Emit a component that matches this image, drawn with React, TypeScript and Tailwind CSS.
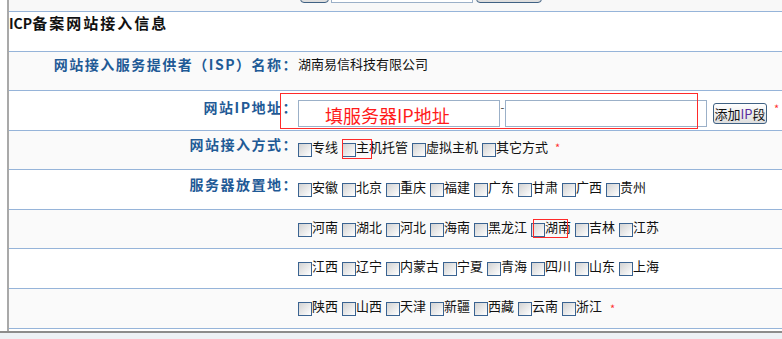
import React from "react";

const line = "border-b border-[#96b4d9]";

function Box() {
  return (
    <span className="mt-[5px] h-[14px] w-[14px] shrink-0 border border-[#3a6391] bg-linear-to-br from-[#d2d2d2] to-white" />
  );
}

function Item({ t }: { t: string }) {
  return (
    <span className="mr-[4px] flex items-start">
      <Box />
      <span className="text-[13px] leading-[18px] text-[#111]">{t}</span>
    </span>
  );
}

function Star({ className = "" }: { className?: string }) {
  return <span className={"text-[11px] leading-[14px] text-[#ff3030] " + className}>*</span>;
}

function Label({ children, pt }: { children: React.ReactNode; pt: string }) {
  return (
    <div
      className={
        "w-[289px] shrink-0 text-right text-[14px] font-bold leading-[18px] tracking-[1.5px] text-[#1f5a96] " + pt
      }
    >
      {children}
    </div>
  );
}

function Row({
  h,
  alt,
  children,
}: {
  h: string;
  alt?: boolean;
  children: React.ReactNode;
}) {
  return (
    <div className={`flex ${h} ${line} ${alt ? "bg-[#fafafa]" : "bg-white"}`}>
      {children}
    </div>
  );
}

const places = [
  ["安徽", "北京", "重庆", "福建", "广东", "甘肃", "广西", "贵州"],
  ["河南", "湖北", "河北", "海南", "黑龙江", "湖南", "吉林", "江苏"],
  ["江西", "辽宁", "内蒙古", "宁夏", "青海", "四川", "山东", "上海"],
  ["陕西", "山西", "天津", "新疆", "西藏", "云南", "浙江"],
];

export default function App() {
  return (
    <div className="relative h-[339px] w-[782px] overflow-hidden bg-[#edf1f5] font-['Noto_Sans_CJK_SC',sans-serif]">
      <div className="flex h-[331px] bg-white">
        <div className="w-[9px] shrink-0 border-r-2 border-[#a9a9a9] bg-white" />
        <div className="flex flex-1 flex-col">
          {/* cut-off controls from the block above */}
          <div className={`h-[12px] overflow-hidden bg-[#f8f8f8] ${line}`}>
            <div className="-mt-[18px] flex items-end pl-[291px]">
              <span className="h-[20px] w-[29px] rounded-[4px] border border-[#3f6183] bg-linear-to-b from-white to-[#dcdcdc]" />
              <span className="ml-[2px] h-[21px] w-[142px] border border-[#9bb0c8] bg-white" />
              <span className="ml-[3px] h-[20px] w-[66px] rounded-[4px] border border-[#3f6183] bg-linear-to-b from-white to-[#dcdcdc]" />
            </div>
          </div>

          <div className={`h-[40px] bg-white ${line}`}>
            <div className="font-bold leading-[20px] text-[#111]">
              <span className="text-[14px]">ICP</span>
              <span className="text-[15px] tracking-[2px]">备案网站接入信息</span>
            </div>
          </div>

          <Row h="h-[39px]" alt>
            <Label pt="pt-[3px]">网站接入服务提供者（ISP）名称：</Label>
            <div className="pt-[3px] text-[13px] leading-[18px] text-[#111]">湖南易信科技有限公司</div>
          </Row>

          <Row h="h-[40px]">
            <Label pt="pt-[7px]">网站IP地址：</Label>
            <div className="flex items-start pt-[9px]">
              <span className="h-[27px] w-[202px] border border-[#9bb0c8] bg-white" />
              <span className="w-[5px] text-center text-[11px] leading-[14px] text-[#333]">-</span>
              <span className="h-[27px] w-[202px] border border-[#9bb0c8] bg-white" />
              <button className="ml-[6px] mt-[3px] h-[21px] w-[54px] rounded-[3px] border border-[#3f6183] bg-linear-to-b from-white to-[#dedede] text-[13px] leading-[18px] text-[#111]">
                添加<span className="text-[#5b2d9e]">IP</span>段
              </button>
              <Star className="ml-[7px] mt-[1px]" />
            </div>
          </Row>

          <Row h="h-[39px]" alt>
            <Label pt="pt-[4px]">网站接入方式：</Label>
            <div className="flex items-start pt-[7px]">
              {["专线", "主机托管", "虚拟主机", "其它方式"].map((t) => (
                <Item key={t} t={t} />
              ))}
              <Star className="ml-[3px] mt-[2px]" />
            </div>
          </Row>

          {places.map((row, i) => (
            <Row key={i} h={i === 1 ? "h-[39px]" : "h-[40px]"} alt={i % 2 === 1}>
              <Label pt="pt-[5px]">{i === 0 ? "服务器放置地：" : ""}</Label>
              <div className="flex items-start pt-[8px]">
                {row.map((t) => (
                  <Item key={t} t={t} />
                ))}
                {i === 3 && <Star className="ml-[4px] mt-[4px]" />}
              </div>
            </Row>
          ))}
        </div>
      </div>
      <div className="h-[2px] bg-[#8c8c8c]" />

      {/* red annotation marks */}
      <div className="absolute left-[280px] top-[93px] h-[36px] w-[418px] border border-[#ff2a2a]" />
      <div className="absolute left-[325px] top-[105px] text-[18px] leading-[20px] text-[#ff1a1a]">
        填服务器IP地址
      </div>
      <div className="absolute left-[342px] top-[139px] h-[20px] w-[30px] border border-[#ff2a2a]" />
      <div className="absolute left-[533px] top-[219px] h-[19px] w-[35px] border border-[#ff2a2a]" />
    </div>
  );
}
